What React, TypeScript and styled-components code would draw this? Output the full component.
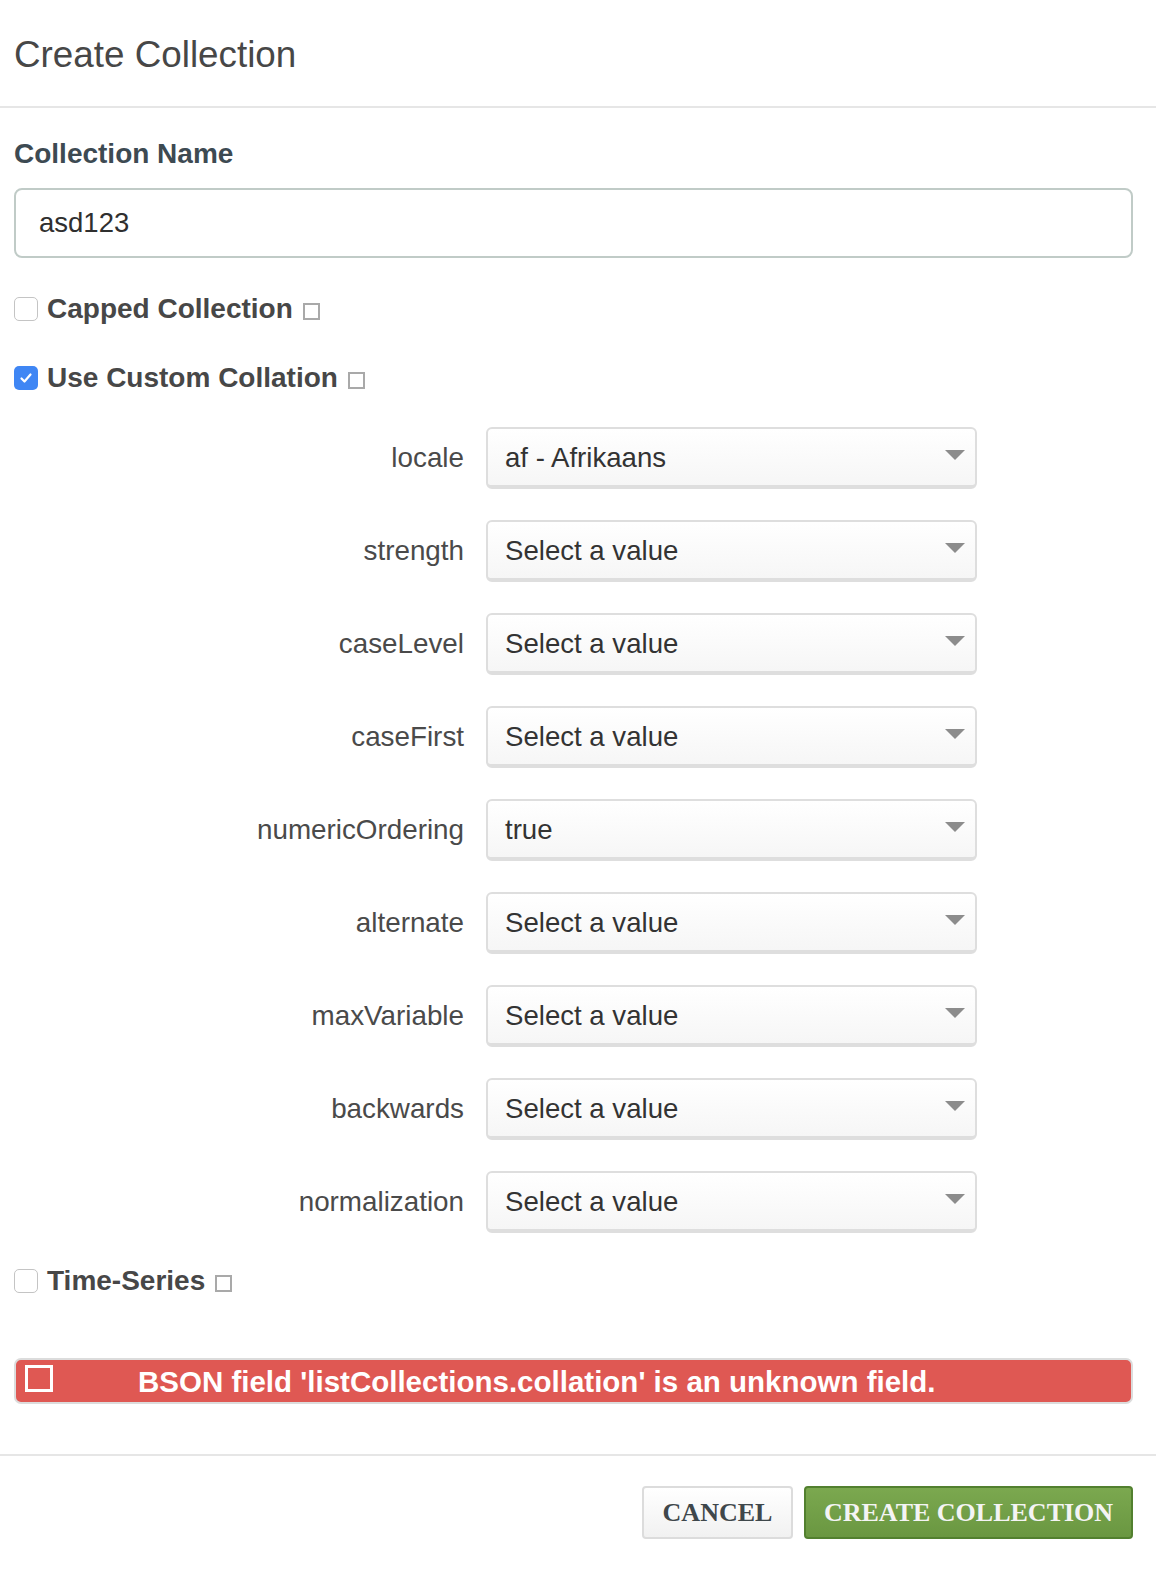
import React from "react";
import styled, { createGlobalStyle } from "styled-components";

const Global = createGlobalStyle`
  html, body { margin: 0; padding: 0; background: #fff; }
  body { font-family: "Liberation Sans", Arial, sans-serif; }
  * { box-sizing: border-box; }
`;

const Modal = styled.div`
  width: 1156px;
  background: #fff;
`;

const Header = styled.div`
  height: 108px;
  display: flex;
  align-items: center;
  padding: 3px 14px 0;
  border-bottom: 2px solid #e6e6e6;
`;

const Title = styled.h1`
  margin: 0;
  font-size: 36.8px;
  font-weight: 400;
  color: #474747;
  line-height: 42px;
`;

const Body = styled.div`
  padding: 31px 23px 0 14px;
  display: flex;
  flex-direction: column;
`;

const FieldLabel = styled.div`
  font-size: 28px;
  line-height: 30px;
  font-weight: 700;
  color: #3d4a52;
`;

const TextInput = styled.div`
  margin-top: 19px;
  height: 70px;
  border: 2px solid #c0cbc7;
  border-radius: 8px;
  display: flex;
  align-items: center;
  padding-left: 23px;
  font-size: 27.5px;
  color: #2f2f2f;
`;

const CheckRow = styled.div<{ $mt: number }>`
  margin-top: ${(p) => p.$mt}px;
  height: 30px;
  display: flex;
  align-items: center;
`;

const Box = styled.span<{ $checked?: boolean }>`
  width: 24px;
  height: 24px;
  border-radius: 5px;
  border: ${(p) => (p.$checked ? "none" : "1.5px solid #c4c4c4")};
  background: ${(p) => (p.$checked ? "#3f86f4" : "#fff")};
  display: inline-flex;
  align-items: center;
  justify-content: center;
  flex-shrink: 0;
`;

const CheckLabel = styled.span`
  margin-left: 9px;
  font-size: 28px;
  font-weight: 700;
  color: #474747;
`;

const InfoSquare = styled.span`
  width: 17px;
  height: 17px;
  border: 2px solid #a9a9a9;
  margin-left: 10px;
  margin-top: 4px;
  display: inline-block;
`;

const Grid = styled.div`
  margin-top: 34px;
  display: grid;
  grid-template-columns: 450px 491px;
  column-gap: 22px;
  row-gap: 31px;
  align-items: center;
`;

const SelLabel = styled.div`
  text-align: right;
  font-size: 27.8px;
  color: #4a4a4a;
`;

const Select = styled.div`
  height: 62px;
  border: 2px solid #dedede;
  border-bottom-width: 4px;
  border-radius: 6px;
  background: linear-gradient(#ffffff, #f6f6f6);
  display: flex;
  align-items: center;
  justify-content: space-between;
  padding: 2px 10px 0 17px;
  font-size: 27.6px;
  color: #333;
`;

const Caret = styled.span`
  width: 0;
  height: 0;
  border-left: 10px solid transparent;
  border-right: 10px solid transparent;
  border-top: 10px solid #8c8c8c;
  margin-top: -6px;
`;

const ErrorBar = styled.div`
  margin-top: 62px;
  height: 46px;
  border: 2px solid #dcdcdc;
  border-radius: 7px;
  background: #df5853;
  display: flex;
  align-items: center;
  padding-left: 9px;
  color: #fff;
  font-size: 29.5px;
  font-weight: 700;
  white-space: nowrap;
`;

const ErrIcon = styled.span`
  width: 28px;
  height: 27px;
  border: 3px solid #fff;
  margin-top: -6px;
  flex-shrink: 0;
`;

const ErrText = styled.span`
  margin-left: 85px;
  margin-top: 2px;
`;

const Footer = styled.div`
  margin-top: 50px;
  border-top: 2px solid #e6e6e6;
  padding: 30px 23px 30px 14px;
  display: flex;
  justify-content: flex-end;
  gap: 11px;
`;

const Button = styled.button<{ $primary?: boolean }>`
  height: 53px;
  padding: 0;
  white-space: nowrap;
  font-family: "Liberation Serif", "Times New Roman", serif;
  font-weight: 700;
  font-size: 26px;
  text-transform: uppercase;
  border-radius: 4px;
  border: 2px solid ${(p) => (p.$primary ? "#52802f" : "#dcdcdc")};
  background: ${(p) =>
    p.$primary ? "linear-gradient(#7ba84f, #6a9741)" : "linear-gradient(#ffffff, #f1f1f1)"};
  color: ${(p) => (p.$primary ? "#f4f4f4" : "#3f474b")};
  width: ${(p) => (p.$primary ? 329 : 151)}px;
`;

const rows: [string, string][] = [
  ["locale", "af - Afrikaans"],
  ["strength", "Select a value"],
  ["caseLevel", "Select a value"],
  ["caseFirst", "Select a value"],
  ["numericOrdering", "true"],
  ["alternate", "Select a value"],
  ["maxVariable", "Select a value"],
  ["backwards", "Select a value"],
  ["normalization", "Select a value"],
];

export default function App() {
  return (
    <>
      <Global />
      <Modal>
        <Header>
          <Title>Create Collection</Title>
        </Header>
        <Body>
          <FieldLabel>Collection Name</FieldLabel>
          <TextInput>asd123</TextInput>
          <CheckRow $mt={36}>
            <Box />
            <CheckLabel>Capped Collection</CheckLabel>
            <InfoSquare />
          </CheckRow>
          <CheckRow $mt={39}>
            <Box $checked>
              <svg width="16" height="16" viewBox="0 0 16 16">
                <path d="M3.5 8.5 L6.5 11.5 L12.5 4.5" stroke="#fff" strokeWidth="2.2" fill="none" strokeLinecap="round" strokeLinejoin="round" />
              </svg>
            </Box>
            <CheckLabel>Use Custom Collation</CheckLabel>
            <InfoSquare />
          </CheckRow>
          <Grid>
            {rows.map(([l, v]) => (
              <React.Fragment key={l}>
                <SelLabel>{l}</SelLabel>
                <Select>
                  <span>{v}</span>
                  <Caret />
                </Select>
              </React.Fragment>
            ))}
          </Grid>
          <CheckRow $mt={33}>
            <Box />
            <CheckLabel>Time-Series</CheckLabel>
            <InfoSquare />
          </CheckRow>
          <ErrorBar>
            <ErrIcon />
            <ErrText>BSON field 'listCollections.collation' is an unknown field.</ErrText>
          </ErrorBar>
        </Body>
        <Footer>
          <Button>Cancel</Button>
          <Button $primary>Create Collection</Button>
        </Footer>
      </Modal>
    </>
  );
}
